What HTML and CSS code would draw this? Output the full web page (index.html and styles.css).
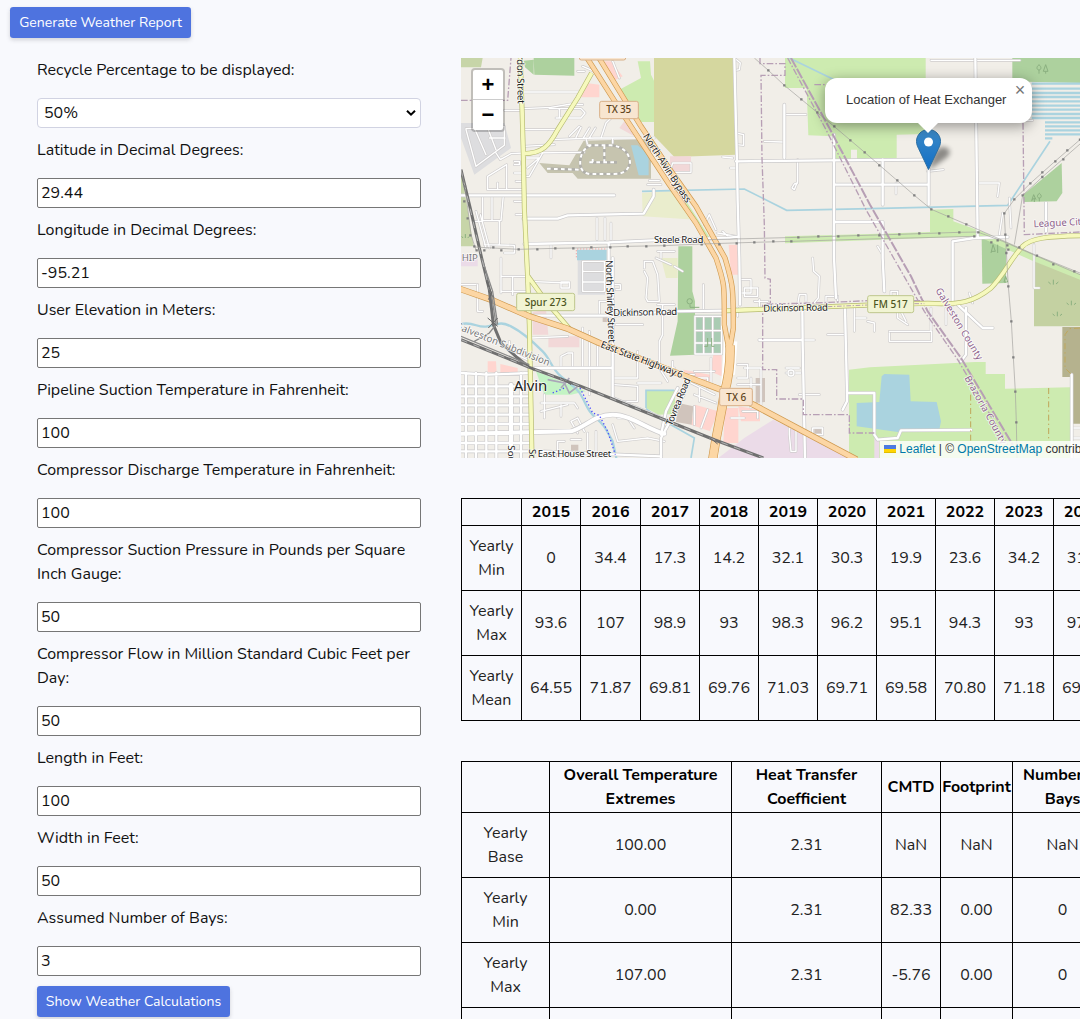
FILE: index.html
```html
<!DOCTYPE html>
<html lang="en">
<head>
<meta charset="utf-8">
<title>Weather Report</title>
<link rel="stylesheet" href="styles.css">
</head>
<body>
<header class="toolbar"><button class="btn w-generate">Generate Weather Report</button></header>
<main class="layout">
<form class="form">
  <label class="label">Recycle Percentage to be displayed:</label>
  <div class="select"><span>50%</span><svg width="10" height="8" viewBox="0 0 10 8"><path d="M1 1.700 5 5.700 9 1.700" fill="none" stroke="#000" stroke-width="2"/></svg></div>
  <label class="label">Latitude in Decimal Degrees:</label>
  <input class="input" value="29.44">
  <label class="label">Longitude in Decimal Degrees:</label>
  <input class="input" value="-95.21">
  <label class="label">User Elevation in Meters:</label>
  <input class="input" value="25">
  <label class="label">Pipeline Suction Temperature in Fahrenheit:</label>
  <input class="input" value="100">
  <label class="label">Compressor Discharge Temperature in Fahrenheit:</label>
  <input class="input" value="100">
  <label class="label">Compressor Suction Pressure in Pounds per Square<br>Inch Gauge:</label>
  <input class="input" value="50">
  <label class="label">Compressor Flow in Million Standard Cubic Feet per<br>Day:</label>
  <input class="input" value="50">
  <label class="label">Length in Feet:</label>
  <input class="input" value="100">
  <label class="label">Width in Feet:</label>
  <input class="input" value="50">
  <label class="label">Assumed Number of Bays:</label>
  <input class="input" value="3">
  <button class="btn w-show" type="button">Show Weather Calculations</button>
</form>
<section class="results">
<div class="map">
<svg class="tiles" viewBox="0 0 1857 1200" width="619" height="400">
  <rect width="1857" height="1200" fill="#f1eee8"/>
  <!-- land use -->
  <g class="wood">
    <path d="M218 0H340V53L220 50ZM188 8 218 5V50L192 28Z"/>
    <path d="M1654 0H1857V75L1654 70Z"/>
    <path d="M1802 315 1804 405 1787 430 1689 432 1687 410Z"/>
    <path d="M1562 540 1635 555V675L1564 677Z"/>
    <path d="M652 565H694V700L702 730V890L627 893 650 790Z"/>
    <path d="M1340 1142H1427V1160H1340Z"/>
  </g>
  <g class="grass">
    <path d="M530 10H567L570 50 579 68V192H530L475 95 540 60Z"/>
    <path d="M972 0V90H1037L1042 232 1117 235 1120 303H1170V275H1188V303L1307 300V230L1394 228V0Z"/>
    <path d="M972 535 1227 528 1407 522V455L1477 453V490L1560 520 1857 648V672L1550 535 972 556Z"/>
    <path d="M1164 935 1227 928 1542 912H1574V948H1632V992L1827 988V1200H1164Z"/>
    <path d="M555 997H642V1068L592 1070 555 1050Z"/>
    <path d="M660 430 675 428 750 545 735 548Z"/>
  </g>
  <path d="M0 0H65L60 28H0ZM0 335 38 565H0Z" fill="#c7d5a8"/>
  <path d="M579 0H820L825 290 640 297 579 233Z" fill="#d5d79f"/>
  <path d="M543 405 640 398 705 485 545 475Z" fill="#eaedcd"/>
  <path d="M600 600H650V660H615Z" fill="#e9eccb"/>
  <path d="M0 195 130 195 150 270 40 350 0 240ZM350 592H432V710H350Z" fill="#dddddf"/>
  <path d="M368 248 570 243V362H350L335 345H260L235 315 325 322Z" fill="#c6c4af"/>
  <path d="M1719 610 1857 665V805H1719Z" fill="#c4d1a2"/>
  <path d="M1804 807H1857V1097H1832V957H1804Z" fill="#b5b28e"/>
  <path d="M702 770H784V890H702Z" fill="#aaccb3"/>
  <path d="M937 1085 1180 1200H772L850 1140ZM0 590H50V625H0ZM1240 1140H1255V1200H1240Z" fill="#ebdbe8"/>
  <path d="M225 940 375 1000 330 1010H250Z" fill="#c3f3c4"/>
  <g fill="#ffd5cf">
    <path d="M375 75 415 80V118H360ZM430 10H450L485 55 455 70ZM803 560H832V650H810ZM80 910H105L107 945 80 942ZM118 918 170 930V945H118ZM757 890H782V955L747 940ZM702 1040 772 1060 747 1120 690 1100ZM792 1050H832V1155H787ZM832 1045 897 1055V1090H840ZM667 935 747 950V970L667 955Z"/>
  </g>
  <g fill="#f2d8d8"><path d="M627 295H690V345H627ZM490 190 520 235 475 210ZM215 762 255 755 262 830H215ZM262 835H355V868H262Z"/></g>
  <g fill="#d0c4bc"><path d="M652 1035 697 1045 692 1100 645 1092ZM884 960H912V1032L884 1035ZM1060 1110H1080V1125H1060ZM330 1160H352V1178H330ZM425 778H440V792H425Z"/></g>
  <!-- water -->
  <g fill="#aad3df">
    <path d="M510 262H530L563 290V352H533ZM348 575H437V607H348Z"/>
    <path d="M1187 1035 1255 1032 1262 955 1270 948 1345 950 1349 1030 1427 1032 1440 1090 1435 1115 1310 1122 1187 1105Z"/>
  </g>
  <path d="M346 598V573H438" fill="none" stroke="#f0a8a8" stroke-width="3" stroke-dasharray="4 5"/>
  <path d="M1712 77H1857M1712 92H1857M1712 105H1857M1712 117H1857M1712 130H1857M1712 143H1857M1712 155H1857M1712 168H1857M1712 180H1857M1752 193H1857M1752 205H1857M1752 217H1857M1752 229H1857M1752 241H1774" stroke="#aad3df" stroke-width="7"/>
  <path class="stream" d="M543 400 627 398 850 393 977 457 1227 452 1640 442 1767 250M985 0 1140 75M555 1050V997H640M555 1052 590 1078 700 1140 690 1200"/>
  <path class="stream wide" d="M0 798C40 790 50 812 80 805S120 790 150 805 220 855 245 880 270 930 300 955 350 990 365 1020 385 1065 410 1085 440 1125 455 1150L466 1200"/>
  <!-- streets: casing first, then fill -->
  <defs>
    <g id="lanes">
      <path d="M187 102H355M187 152 270 148 330 138 365 140M265 152H360L372 165 360 180H285M187 215H290M270 245 400 240 580 240M187 265 280 260M200 285 370 283M130 157H175M185 345H160M185 370H165M185 430H160M185 470H165M295 152V180M325 235 355 205M345 238 360 208M368 238 385 210M385 240 403 210M420 240 435 195 450 180M455 255V240M380 262 375 240"/>
      <path d="M15 215 45 325 130 262V205L15 212ZM40 210 75 290M78 205 105 275M85 240H132M105 285 118 305 150 287 187 285M80 395V355L137 320V395M110 395V375M80 395H185M245 285 205 355H195M197 300H235L200 330M160 310H175V320H160"/>
      <path d="M65 415V490M93 412V488M65 488H120L127 412M40 490H65M45 460 75 570M58 470 85 570M115 488V560M70 560 160 562V585H130M408 480V545M432 480V545M450 495V545M270 560V600M560 380H600M565 368H595M590 580H640M600 580V600"/>
      <path d="M365 25 400 40M455 10 475 60M370 40H350M820 0 838 15 835 35 820 38M825 225 848 230 848 262 828 260M785 297 815 300M808 330H825M627 340 635 315H690V343H640M970 170H1035M910 250 965 252M1010 305V370L1000 395 993 390 1000 378 1010 375M730 500 745 470 765 515M770 525 825 535M785 520 800 535M1555 375H1615L1610 415M1625 465 1615 530M1645 420 1650 510M1400 340 1447 335M1305 375V408M1719 560V690H1735M1410 7H1677M1670 187H1715M1250 565 1265 590"/>
      <path d="M0 680H45M50 680V760H65M120 655H205M120 600V705M155 655V710M205 670 320 675H300V690H325V672H300M120 700H205M365 610H430V700H365V610M365 640H430M365 672H430M415 770V730H440M478 680V695H465M478 680H440M550 630V610H575L590 650 595 730H560L555 720 560 660 550 640M585 600 630 620M590 740H640M605 740V830L595 850V930L620 970M465 800H545M365 810V930M385 820V1010M410 850V930M300 930V895L320 885H335V925M210 840 320 835M530 880V960M460 980 530 985V1030H470M145 850V880L210 910M240 1035H340L350 1050M240 1060 320 1040M250 1010V1080M300 1040V1075M460 960H530M455 1100 470 1150 560 1140 610 1150M370 1120 350 1080 330 1090 350 1125M290 1200V1150H310M380 1125V1190M405 1120V1190M360 1145H330M530 975H600M470 1080H500L520 1110"/>
      <path d="M837 665H870V705H837V665M850 690H890V715H850ZM880 730H920M895 725V745M727 680V760M640 625 665 640M1010 740 1015 710 1035 710V730M1095 740V715H1130V730M1055 600 1058 640 1075 655 1072 720 1055 740M830 750V775M895 846H1060M975 945H1020M975 930H1015M1015 1010H1075M990 1110H1005V1180H990L985 1130V1110M1055 1110H1085V1130H1055ZM1100 830H1150M1185 780H1215M1180 750V820M1220 790 1240 795V820M1290 700H1310V780L1340 800M1290 700V740M1320 760 1335 790M1285 825V850H1412V820H1285M1410 750V820M1455 750V800M1525 705 1535 735M1832 1110H1857M1832 1140H1857"/>
      <path d="M702 775H782V888H702ZM728 775V888M755 775V888M702 818H782M702 855H782M635 910V950H700M640 930H600M680 960H740V990M690 975 760 1010M700 1010 765 1035M750 900V990M830 920H860V960H830M850 930H900V960M870 960V1050M900 955V1040M845 1060H890V1080M700 1045V1100M740 1055 720 1110M810 1080H850M670 1010 640 1060M700 940H760M715 990V1030M830 980H900"/>
    </g>
    <g id="roads">
      <path d="M0 412H460M187 482H290L320 472 548 467 578 415V395M190 558 443 553 620 545 800 540 830 536M443 553V640M820 0 825 200 828 310 830 430 835 600 837 740"/>
      <path d="M825 310 1100 307 1400 305M970 140V300M1119 230V600L1125 720M1123 380H1400M1403 330V440M1265 305V440M1119 492H1265V600L1270 700M1543 0 1550 540M1475 740V550L1540 540 1640 537M1755 435V520"/>
      <path d="M210 773H455L627 760 795 758M895 846H1020M1024 750 1025 860 1032 1200M1152 750 1158 1005H1240V1130M1158 1005V1030L1145 1055M1240 1130 1250 1145 1310 1140 1320 1117 1530 1116M1490 740 1565 810H1595M1515 750V890L1500 910M1832 950V1200M600 1200V1140L627 1090"/>
      <path d="M15 945V1200M45 945V1200M76 945V1200M106 945V1200M180 945V1200M0 945 80 950 210 945M0 985H210M0 1015H210M0 1042H210M0 1070H210M0 1098H210M0 1155H210M0 1180H210M240 1180 600 1195M600 1130 615 1060 650 990"/>
      <path d="M455 600V1020L627 1090M210 930H455"/>
    </g>
    <path id="avenue" d="M150 980V1200M0 1127 330 1120C370 1110 400 1070 455 1070S560 1115 610 1127"/>
  </defs>
  <use href="#lanes" class="lane-case"/><use href="#lanes" class="lane"/>
  <use href="#roads" class="road-case"/><use href="#avenue" class="road-case a"/>
  <use href="#roads" class="road"/><use href="#avenue" class="road a"/>
  <circle class="lane-case" cx="990" cy="945" r="9"/><circle class="lane" cx="990" cy="945" r="9"/>
  <defs><path id="track" d="M258 332 355 335M380 262H450C490 265 507 290 507 315 500 340 485 348 460 348H385C365 345 355 330 358 305 362 280 372 270 390 262M430 262V312M385 313H468M395 313V303"/></defs>
  <use href="#track" class="track"/><use href="#track" class="track dashes"/>
  <!-- boundaries -->
  <g class="boundary">
    <path d="M0 127H140L150 0M897 0V17H972V52H900L903 300 910 500 912 660 928 664V735M905 740V935H947V1023H1027V1070H1165V1125H1240M1060 80H1140M1686 195 1690 530 1857 522M917 738 1060 735 1220 728"/>
    <path d="M990 0 1105 210 1227 440 1350 655 1400 760 1500 900 1655 1160" class="bold"/>
    <path d="M980 0 1095 215 1215 455 1335 665 1390 760 1490 905 1640 1160"/>
    <path d="M1358 728H1390M1358 740H1400"/>
  </g>
  <path d="M1529 1010V1150M1763 990V1150M1857 810 1825 812 1812 830V930L1832 950" fill="none" stroke="#c1a75a" stroke-width="3" stroke-dasharray="18 9 4 9"/>
  <path d="M357 990 395 1065 415 1072 440 1120 463 1190M275 1005 310 990" fill="none" stroke="#4c4cff" stroke-width="4" stroke-dasharray="4 7"/>
  <path d="M260 965 310 975 325 1005 350 985M300 990 325 960" fill="none" stroke="#aaa6b8" stroke-width="5"/>
  <!-- secondary roads -->
  <defs>
    <path id="yellow" d="M178 0 183 150 187 287 190 450 200 660 205 800 213 1200M392 45 350 120 290 215C265 262 245 287 187 287M201 655 255 730 325 812M795 758 1227 741 1400 736C1500 742 1540 730 1590 690 1630 650 1650 600 1685 565 1710 540 1760 535 1857 533"/>
    <path id="orange" d="M375 -5 500 190 625 380 705 495 765 600C792 680 790 680 790 800L803 870M405 -15 540 205 627 335 705 445 792 600C815 680 817 680 817 810L807 870"/>
    <path id="merge" d="M807 862C809 920 797 980 790 1005 777 1100 772 1090 755 1205"/>
    <path id="state" d="M-5 692 90 725 205 775 320 812 415 855 627 937 772 992 877 1040 1027 1120 1187 1205"/>
  </defs>
  <path d="M797 850 785 1010 765 1200M822 850 815 950" fill="none" stroke="#fff" stroke-width="14"/>
  <use href="#yellow" class="y-case"/><use href="#yellow" class="y-fill"/>
  <use href="#orange" class="o-case"/><use href="#state" class="o-case s"/><use href="#merge" class="o-case m"/>
  <use href="#orange" class="o-fill"/><use href="#state" class="o-fill s"/><use href="#merge" class="o-fill m"/>
  <path d="M1100 746 1220 741M1360 737H1390" fill="none" stroke="#b79fb5" stroke-width="3" stroke-dasharray="14 5 4 5"/>
  <!-- railway -->
  <g class="rail">
    <path d="M0 335 30 460 62 600 85 695 97 800 120 855 170 900 205 928M0 845 205 928 360 985 627 1092 762 1146 907 1200" class="base"/>
    <path d="M90 700 105 800 85 825 40 850M62 600 95 700 110 800M0 835 205 920" class="spur"/>
    <path d="M0 845 205 928 360 985 627 1092 762 1146 907 1200M0 335 62 600 85 695" class="dash"/>
  </g>
  <path d="M76 670 92 705 82 725M98 718 82 700M80 780 110 805M110 780 82 810M195 920 220 938M300 960 330 980M745 1138 770 1158" stroke="#666" stroke-width="3" fill="none"/>
  <!-- power lines -->
  <g class="power">
    <path d="M0 337 12 385 30 530 45 577M40 567 173 574 282 571 390 569 499 565 610 563 720 558 880 553 990 550 1227 543 1540 535M740 545 1012 538 1315 529 1495 523 1550 522M880 0 922 37 970 82 1021 124 1119 205 1211 283 1360 412 1411 454 1516 499 1730 594 1857 645M1550 522 1625 550 1740 600 1857 650M1857 245 1782 310 1708 376 1660 424 1630 466 1633 530 1642 685 1651 790 1657 898 1663 1001 1666 1093 1668 1200M1857 258 1744 357 1685 412 1660 560"/>
    <path class="tower" d="M12 385v.1M10 430v.1M20 481v.1M28 532v.1M40 565v.1M47 577v.1M70 577v.1M97 568v.1M121 577v.1M173 574v.1M229 574v.1M283 571v.1M337 571v.1M391 568v.1M448 568v.1M500 565v.1M556 565v.1M610 563v.1M722 559v.1M775 559v.1M827 556v.1M880 553v.1M937 550v.1M991 550v.1M1012 538v.1M1072 535v.1M1132 535v.1M1192 532v.1M1255 532v.1M1315 529v.1M1375 526v.1M1435 526v.1M1495 523v.1M1552 523v.1M922 37v.1M970 82v.1M1021 124v.1M1069 163v.1M1120 205v.1M1168 247v.1M1211 283v.1M1255 322v.1M1309 367v.1M1360 412v.1M1411 454v.1M1462 475v.1M1516 499v.1M1540 535v.1M1591 553v.1M1610 547v.1M1639 562v.1M1642 575v.1M1675 568v.1M1728 593v.1M1777 619v.1M1840 640v.1M1857 245v.1M1819 277v.1M1783 310v.1M1744 343v.1M1744 357v.1M1807 304v.1M1708 376v.1M1685 412v.1M1660 424v.1M1630 466v.1M1633 530v.1M1636 585v.1M1642 685v.1M1651 790v.1M1657 898v.1M1663 1001v.1M1666 1093v.1"/>
  </g>
  <g fill="none" stroke="#8bb080" stroke-width="3">
    <path d="M1734 47V35M1734 20c-10 8-6 16 0 16s9-9 0-16M1747 40 1754 20 1761 40H1747M1754 40V47M1720 432V420L1712 428 1718 410 1725 425M1735 430V420M1735 406c-9 7-6 14 0 14s9-7 0-14M1590 585 1596 560 1603 580H1590M1610 585V560M1629 672 1634 655 1640 672Z"/>
    <path d="M1777 680V665M1769 678 1762 672M1785 678 1792 672M1831 742V728M1823 740 1817 735M1839 740 1845 735M1789 775V761M1781 773 1775 768M1797 773 1803 768M13 540V528M6 540 2 535M20 540 25 535"/>
    <circle cx="686" cy="730" r="8"/><path d="M687 740V748H715M740 840V865H730M752 840V865H760"/>
  </g>
  <!-- shields -->
  <g class="shield">
    <rect x="416" y="130" width="116" height="52" rx="6" class="tan"/>
    <rect x="776" y="991" width="98" height="52" rx="6" class="tan"/>
    <rect x="355" y="-40" width="139" height="46" rx="6" class="tan"/>
    <rect x="167" y="706" width="174" height="52" rx="6" class="lime"/>
    <rect x="1220" y="713" width="138" height="51" rx="6" class="lime"/>
    <text x="436" y="166" textLength="75">TX 35</text>
    <text x="796" y="1028" textLength="60">TX 6</text>
    <text x="191" y="743" textLength="126" class="g">Spur 273</text>
    <text x="1237" y="750" textLength="103" class="g">FM 517</text>
  </g>
  <!-- street names -->
  <g class="name">
    <text transform="translate(167 -43) rotate(89)" textLength="180">Gordon Street</text>
    <text transform="translate(545 235) rotate(57)" textLength="240">North Alvin Bypass</text>
    <text x="579" y="555" textLength="148">Steele Road</text>
    <text transform="translate(434 607) rotate(88)" textLength="248">North Shirley Street</text>
    <text transform="translate(457 774) rotate(-1)" textLength="192">Dickinson Road</text>
    <text transform="translate(907 761) rotate(-1)" textLength="194">Dickinson Road</text>
    <text transform="translate(417 867) rotate(21)" textLength="262">East State Highway 6</text>
    <text transform="translate(632 1105) rotate(-68)" textLength="152">Tovrea Road</text>
    <text x="230" y="1198" textLength="221">East House Street</text>
    <text transform="translate(142 1162) rotate(90)" textLength="80">South</text>
    <text transform="translate(204 1173) rotate(90)" textLength="80">South</text>
  </g>
  <text class="name subdivision" transform="translate(-20 810) rotate(22)" textLength="304">Galveston Subdivision</text>
  <text class="name city" x="158" y="999" textLength="101">Alvin</text>
  <g class="name county">
    <text transform="translate(1423 697) rotate(59)" textLength="246">Galveston County</text>
    <text transform="translate(1510 960) rotate(61)" textLength="230">Brazoria County</text>
    <text transform="translate(1718 508) rotate(-3)" textLength="158">League City</text>
  </g>
  <text class="name subdivision" x="2" y="610">HIP</text>
</svg>
<svg class="marker" width="62" height="46" viewBox="0 0 62 46">
  <defs>
    <linearGradient id="pin" x1="0" y1="0" x2="0" y2="1"><stop offset="0" stop-color="#3c89c6"/><stop offset="1" stop-color="#126fc6"/></linearGradient>
    <filter id="soft" x="-60%" y="-60%" width="220%" height="220%"><feGaussianBlur stdDeviation="2.600"/></filter>
  </defs>
  <path d="M13 41 C15 33 17 20 26 18 C35 18 36 25 30 29Z" fill="#000" opacity=".42" filter="url(#soft)"/>
  <path d="M12.500.500C5.800.500.500 5.800.500 12.400c0 2.600 1 5 2 7L12.500 40.500l10-21.100c1-2 2-4.400 2-7C24.500 5.800 19.200.500 12.500.500Z" fill="url(#pin)" stroke="#2d6fa3"/>
  <circle cx="12.500" cy="13" r="4.500" fill="#fff"/>
</svg>
<div class="popup"><span>Location of Heat Exchanger</span><b class="close">×</b></div><i class="tip"></i>
<div class="zoom"><span>+</span><span>−</span></div>
<div class="attribution"><svg width="12" height="8" viewBox="0 0 12 8"><path fill="#4C7BE1" d="M0 0h12v4H0z"/><path fill="#FFD500" d="M0 4h12v3H0z"/><path fill="#E0BC00" d="M0 7h12v1H0z"/></svg> <a>Leaflet</a> | © <a>OpenStreetMap</a> contributors</div>
</div>
<table class="grid years">
<colgroup><col class="c60"><col class="c59"><col class="c60"><col span="8" class="c59"></colgroup>
<tr><th></th><th>2015</th><th>2016</th><th>2017</th><th>2018</th><th>2019</th><th>2020</th><th>2021</th><th>2022</th><th>2023</th><th>2024</th></tr>
<tr><td>Yearly<br>Min</td><td>0</td><td>34.4</td><td>17.3</td><td>14.2</td><td>32.1</td><td>30.3</td><td>19.9</td><td>23.6</td><td>34.2</td><td>31.5</td></tr>
<tr><td>Yearly<br>Max</td><td>93.6</td><td>107</td><td>98.9</td><td>93</td><td>98.3</td><td>96.2</td><td>95.1</td><td>94.3</td><td>93</td><td>97.3</td></tr>
<tr><td>Yearly<br>Mean</td><td>64.55</td><td>71.87</td><td>69.81</td><td>69.76</td><td>71.03</td><td>69.71</td><td>69.58</td><td>70.80</td><td>71.18</td><td>69.90</td></tr>
</table>
<table class="grid bays">
<colgroup><col class="c88"><col class="c182"><col class="c150"><col class="c59"><col class="c72"><col class="c100"></colgroup>
<tr><th></th><th>Overall Temperature<br>Extremes</th><th>Heat Transfer<br>Coefficient</th><th>CMTD</th><th>Footprint</th><th>Number of<br>Bays</th></tr>
<tr><td>Yearly<br>Base</td><td>100.00</td><td>2.31</td><td>NaN</td><td>NaN</td><td>NaN</td></tr>
<tr><td>Yearly<br>Min</td><td>0.00</td><td>2.31</td><td>82.33</td><td>0.00</td><td>0</td></tr>
<tr><td>Yearly<br>Max</td><td>107.00</td><td>2.31</td><td>-5.76</td><td>0.00</td><td>0</td></tr>
<tr><td><br><br></td><td></td><td></td><td></td><td></td><td></td></tr>
</table>
</section>
</main>
</body>
</html>
```
FILE: styles.css
```css
* { box-sizing: border-box; }
html, body { height: 1019px; overflow: hidden; }
body { margin: 0; background: #f8f9fd; color: #111; font: 16px/24px Nunito, Lato, sans-serif; }
.toolbar { padding: 7px 10px 0; height: 58px; }
.btn { display: block; height: 31px; border: 0; border-radius: 3.2px; padding: 0; background: #4e73df; color: #fff; font: 14px/21px Nunito, Lato, sans-serif; box-shadow: 0 2px 4px rgba(58, 59, 69, .2); white-space: nowrap; }
.w-generate { width: 181px; }
.w-show { width: 193px; }
.layout { display: flex; height: 961px; overflow: hidden; }
.form { flex: none; width: 384px; margin-left: 37px; }
.label { display: block; margin-bottom: 16px; white-space: nowrap; }
.input, .select { display: block; width: 384px; height: 30px; margin-bottom: 10px; background: #fff; color: #111; font: inherit; }
.input { border: 1px solid #767676; border-radius: 2px; padding: 0 3px 1px; }
.select { display: flex; align-items: center; justify-content: space-between; border: 1px solid #d1d3e2; border-radius: 4px; padding: 0 4px 1px 6px; }
.results { flex: none; width: 660px; margin-left: 40px; }

.map { position: relative; height: 400px; width: 619px; margin-bottom: 40px; overflow: hidden; font-family: "Liberation Sans", sans-serif; }
.tiles { display: block; }
.wood { fill: #add19e; }
.grass { fill: #cdebb0; }
.stream { fill: none; stroke: #aad3df; stroke-width: 5; }
.stream.wide { stroke-width: 7; }
.lane-case, .lane, .road-case, .road { fill: none; stroke-linecap: round; stroke-linejoin: round; }
.lane-case { stroke: #cfcdcd; stroke-width: 8; }
.lane { stroke: #fff; stroke-width: 4; }
.road-case { stroke: #cbcacb; stroke-width: 11; }
.road { stroke: #fff; stroke-width: 7; }
.road-case.a { stroke-width: 16; }
.road.a { stroke-width: 12; }
.track { fill: none; stroke: #b1b0aa; stroke-width: 8; }
.track.dashes { stroke: #fff; stroke-width: 6; stroke-dasharray: 11 10; }
.boundary { fill: none; stroke: #b79fb5; stroke-width: 4; stroke-dasharray: 20 6 5 6; }
.boundary .bold { stroke-width: 6; stroke-dasharray: 32 5; }
.rail { fill: none; }
.rail .base { stroke: #707070; stroke-width: 9; }
.rail .spur { stroke: #8a8a8a; stroke-width: 4; }
.rail .dash { stroke: #b5b5b5; stroke-width: 3; stroke-dasharray: 20 20; }
.y-case, .y-fill, .o-case, .o-fill { fill: none; stroke-linejoin: round; }
.y-case { stroke: #b5ba70; stroke-width: 15; }
.y-fill { stroke: #f6f9bd; stroke-width: 11; }
.o-case { stroke: #cf9a50; stroke-width: 16; }
.o-fill { stroke: #fcd6a4; stroke-width: 12; }
.o-case.s { stroke-width: 19; }
.o-fill.s { stroke-width: 15; }
.o-case.m { stroke-width: 28; }
.o-fill.m { stroke-width: 24; }
.power { fill: none; stroke: #a3a29f; stroke-width: 2; }
.tower { stroke: #808080; stroke-width: 7; stroke-linecap: square; }
.tiles text { font-family: "Noto Sans", sans-serif; font-size: 29px; }
.shield .tan { fill: #f8e5d0; stroke: #d8b088; stroke-width: 3; }
.shield .lime { fill: #f1f4d3; stroke: #bec78c; stroke-width: 3; }
.tiles .shield text { fill: #60451d; font-size: 30px; font-weight: 500; }
.tiles .shield .g { fill: #4c5420; }
.name { fill: #222; stroke: #fff; stroke-width: 5; stroke-opacity: .75; stroke-linejoin: round; paint-order: stroke; }
.tiles .city { font-size: 45px; }
.name.subdivision { fill: #777; }
.name.county { fill: #8d618b; }
.zoom { position: absolute; left: 10px; top: 10px; width: 34px; height: 64px; border: 2px solid rgba(0, 0, 0, .2); border-radius: 4px; background: #fff; background-clip: padding-box; display: grid; grid-template-rows: 30px 30px; }
.zoom span { color: #000; font: bold 22px/30px "Liberation Sans", sans-serif; text-align: center; }
.zoom span:first-child { border-bottom: 1px solid #ccc; }
.popup { position: absolute; left: 364px; top: 20px; width: 207px; height: 45px; border-radius: 12px; background: #fff; box-shadow: 0 3px 14px rgba(0, 0, 0, .4); padding: 13px 0 0 21px; color: #333; font-size: 13px; line-height: 17px; white-space: nowrap; }
.close { position: absolute; right: 0; top: 0; width: 24px; color: #757575; font: 18px/25px "Liberation Sans", sans-serif; text-align: center; }
.tip { position: absolute; left: 456px; top: 64px; border: 11px solid transparent; border-top-color: #fff; border-bottom: 0; }
.marker { position: absolute; left: 455px; top: 71px; }
.attribution { position: absolute; left: 419px; top: 383px; padding: 0 4px; height: 17px; background: rgba(255, 255, 255, .8); color: #333; font-size: 12px; line-height: 17px; white-space: nowrap; }
.attribution a { color: #0078a8; }

.grid { border-collapse: collapse; table-layout: fixed; text-align: center; color: #222; }
.grid th, .grid td { border: 1px solid #000; padding: 1px 0; white-space: nowrap; }
.grid th { color: #000; font-weight: 700; }
.grid td { padding: 8px 0; }
.years { width: 651px; margin-bottom: 40px; }
.bays { width: 651px; }
.c60 { width: 60px; }
.c59 { width: 59px; }
.c88 { width: 88px; }
.c182 { width: 182px; }
.c150 { width: 150px; }
.c72 { width: 72px; }
.c100 { width: 100px; }
```
